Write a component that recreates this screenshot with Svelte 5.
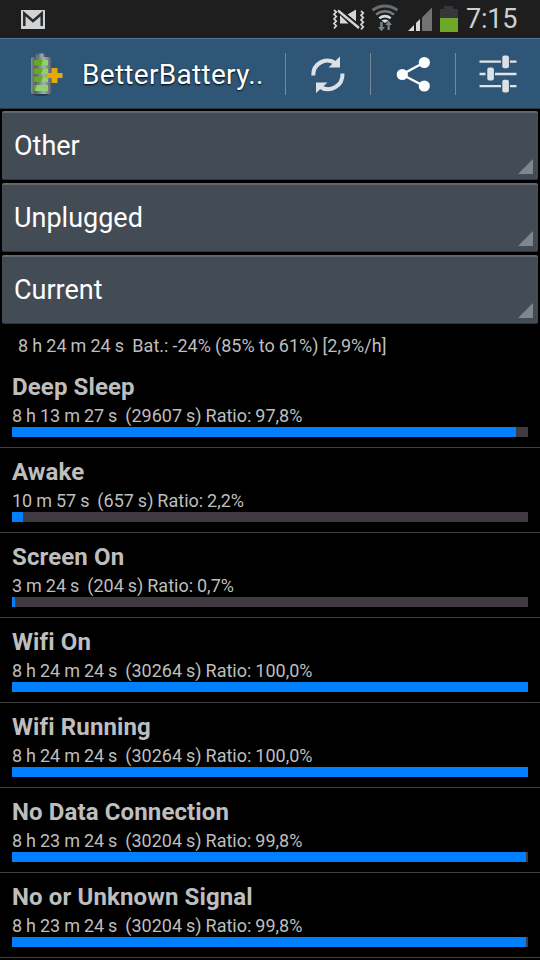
<script>
  const filters = ['Other', 'Unplugged', 'Current'];

  const stats = [
    { name: 'Deep Sleep', time: '8 h 13 m 27 s', secs: 29607, ratio: 97.8 },
    { name: 'Awake', time: '10 m 57 s', secs: 657, ratio: 2.2 },
    { name: 'Screen On', time: '3 m 24 s', secs: 204, ratio: 0.7 },
    { name: 'Wifi On', time: '8 h 24 m 24 s', secs: 30264, ratio: 100 },
    { name: 'Wifi Running', time: '8 h 24 m 24 s', secs: 30264, ratio: 100 },
    { name: 'No Data Connection', time: '8 h 23 m 24 s', secs: 30204, ratio: 99.8 },
    { name: 'No or Unknown Signal', time: '8 h 23 m 24 s', secs: 30204, ratio: 99.8 }
  ];

  // decimal comma, always one digit
  const pct = (n) => n.toFixed(1).replace('.', ',');
  // the bar only fills whole pixels of its 516px track
  const fill = (n) => Math.floor((n / 100) * 516 + 0.01);
</script>

<div class="screen">
  <header class="status">
    <svg class="mail" width="24" height="19" viewBox="0 0 24 19">
      <rect width="24" height="19" fill="#d0d2d4" />
      <path d="M3.300 16V3.500L12 11l8.700-7.500V16" fill="none" stroke="#292b2e" stroke-width="2.500" />
    </svg>
    <svg width="140" height="38" viewBox="330 0 140 38">
      <!-- muted / vibrate -->
      <g fill="none" stroke="#d4d6d7" stroke-width="1.700">
        <path d="M334 10l2.300 2-2.300 2.300 2.300 2.300-2.300 2.300 2.300 2.300-2.300 2.300 2.300 2.300-2.300 2.700" />
        <path d="M361 11l2.300 2-2.300 2.300 2.300 2.300-2.300 2.300 2.300 2.300-2.300 2.300 2.300 2.300-2.300 2.700" />
      </g>
      <path d="M340 15v8.500h8.500zM347.500 14.500l8.500-5v12z" fill="#d4d6d7" />
      <path d="M338.500 10.500l20.500 17" stroke="#1e1e1e" stroke-width="5" />
      <path d="M338 10.500l21 17.500" stroke="#d4d6d7" stroke-width="2.400" />
      <!-- wifi -->
      <g fill="none" stroke-width="2.500">
        <path d="M372.500 10.200q12.500-8.200 25 0" stroke="#666c70" stroke-width="3" />
        <path d="M376 14.500q9-6.300 18 0" stroke="#777c80" />
        <path d="M379.300 18.200q5.700-4.200 11.400 0" stroke="#d7d9da" />
      </g>
      <path d="M381.500 20.500q3.500-2 7 0l-3.500 2.500z" fill="#d7d9da" />
      <path d="M380.200 22h2.500v5h2.200l-3.400 4.300-3.500-4.300h2.200zM387.500 30v-5h-2.300l3.400-4.500 3.500 4.500h-2.300v5z" fill="#77838c" />
      <!-- signal -->
      <path d="M408 31l6-6v6zM416 31v-8l4-4v12z" fill="#d7d9da" />
      <path d="M422 31V17.500L432 7.500V31z" fill="#707274" />
      <!-- battery -->
      <path d="M440 32V9h4V6h9v3h5v23z" fill="#34373b" />
      <rect x="440" y="18" width="18" height="14" fill="#6da82b" />
    </svg>
    <span class="clock">7:15</span>
  </header>

  <div class="actionbar">
    <svg class="logo" width="36" height="46" viewBox="28 50 36 46">
      <defs>
        <linearGradient id="shell">
          <stop offset="0" stop-color="#87929a" />
          <stop offset=".2" stop-color="#52606a" />
          <stop offset=".65" stop-color="#a5b0b6" />
          <stop offset="1" stop-color="#57636c" />
        </linearGradient>
      </defs>
      <ellipse cx="41" cy="93" rx="8" ry="2" fill="#263c4c" />
      <rect x="36" y="52.500" width="9" height="5" rx="2" fill="url(#shell)" />
      <rect x="31" y="56" width="20" height="37" rx="2" fill="url(#shell)" />
      {#each [59, 67.5, 75.5, 84] as y}
        <rect x="34" {y} width="14" height="5.500" fill="#68a91f" />
        <path d="M43 {y}h5v5.500h-7z" fill="#91d06b" />
      {/each}
      <path d="M37 84h11v6H35z" fill="#91d06b" />
      <path d="M51.500 67h6v5h5v5h-5v5h-6v-5h-5v-5h5z" fill="#e4aa0a" />
    </svg>
    <h1>BetterBattery..</h1>
    <button aria-label="Refresh">
      <svg width="84" height="70" viewBox="286 39 84 70">
        <g fill="none" stroke="#dce1e7" stroke-width="4">
          <path d="M313.300 75.500C313 63.500 325.500 56.500 336 63.500" />
          <path d="M342.500 73.500C343 86 330 93.500 319.500 86.500" />
        </g>
        <path d="M340 56.500V67.500h-11.500zM316 93V82.500h11.500z" fill="#dce1e7" />
      </svg>
    </button>
    <button aria-label="Share">
      <svg width="84" height="70" viewBox="371 39 84 70">
        <path d="M424 62.500l-22 12 22 11.500" fill="none" stroke="#fff" stroke-width="2.300" />
        <g fill="#fff">
          <circle cx="424.300" cy="62.500" r="5.600" />
          <circle cx="402.300" cy="74.500" r="5.600" />
          <circle cx="424.300" cy="86" r="5.600" />
        </g>
      </svg>
    </button>
    <button aria-label="Settings">
      <svg width="84" height="70" viewBox="456 39 84 70">
        <path d="M479.500 61.700h21.500M510 61.700h6.500M479.500 74h6M495 74h21.500M479.500 86.200h21.500M510 86.200h6.500" stroke="#dfe4e9" stroke-width="2.300" />
        <g fill="#dce1e7">
          <rect x="502.300" y="55.500" width="6.600" height="12.800" rx="2" />
          <rect x="487.300" y="67.600" width="6.600" height="12.800" rx="2" />
          <rect x="502.300" y="79.700" width="6.600" height="12.800" rx="2" />
        </g>
      </svg>
    </button>
  </div>

  <div class="filters">
    {#each filters as f}
      <div class="spinner">
        <span>{f}</span>
        <svg width="15" height="15" viewBox="0 0 15 15">
          <path d="M15 0v15H0z" fill="#7e878e" />
        </svg>
      </div>
    {/each}
  </div>

  <p class="summary">8 h 24 m 24 s&nbsp; Bat.: -24% (85% to 61%) [2,9%/h]</p>

  <ul class="stats">
    {#each stats as s}
      <li>
        <h2>{s.name}</h2>
        <p>{s.time}&nbsp; ({s.secs} s) Ratio: {pct(s.ratio)}%</p>
        <div class="track"><div class="fill" style="width: {fill(s.ratio)}px"></div></div>
      </li>
    {/each}
  </ul>
</div>

<style>
  :global(body) { background: #000; }

  .screen {
    width: 540px; height: 960px; overflow: hidden;
    display: flex; flex-direction: column;
    background: #000; color: #bebebe;
    font-family: Roboto, sans-serif;
  }

  .status {
    flex: none; height: 38px; padding: 0 22px 0 21px;
    display: flex; align-items: center;
    background: #1e1e1e;
  }
  .mail { margin-right: 285px; }
  .status svg { flex: none; }
  .clock {
    margin-left: -4px; white-space: nowrap;
    font-size: 27px; line-height: 38px; letter-spacing: -0.2px; color: #cdd0d2;
  }

  .actionbar {
    flex: none; box-sizing: border-box; height: 71px;
    display: flex; align-items: center;
    background: #2f5676;
    border-top: 1px solid #507796; border-bottom: 1px solid #283542;
  }
  .logo { flex: none; margin-left: 28px; }
  h1 {
    flex: 1; margin: 3px 0 0 18px; white-space: nowrap;
    font-size: 28px; font-weight: 400; line-height: 70px; letter-spacing: 0.3px; color: #fff;
    text-shadow: 0 1px 2px #000;
  }
  button {
    flex: none; position: relative; width: 85px; height: 69px; padding: 0;
    display: flex; justify-content: flex-end;
    background: none; border: 0;
  }
  button::before {
    content: ''; position: absolute; left: 0; top: 14px;
    width: 1px; height: 42px; background: #7b8791;
  }

  .filters {
    flex: none; padding: 2px 2px 0;
    display: flex; flex-direction: column; gap: 3px;
  }
  .spinner {
    box-sizing: border-box; height: 69px; padding: 0 5px 5px 12px;
    display: flex; align-items: flex-end; justify-content: space-between;
    background: #434c55; border-radius: 2px;
    border-top: 2px solid #616970; border-bottom: 1px solid #2e363c;
  }
  .spinner span { font-size: 27px; line-height: 56px; color: #fff; }

  .summary {
    margin: 0; padding: 11px 18px 0; white-space: nowrap;
    font-size: 18px; line-height: 22px; word-spacing: -0.35px;
  }

  .stats { margin: 6px 0 0; padding: 0; list-style: none; }
  li {
    box-sizing: border-box; height: 85px; padding: 10px 12px 0;
    border-bottom: 1px solid #414141;
  }
  h2 {
    margin: 0;
    font-size: 24px; font-weight: 700; line-height: 28px; letter-spacing: 0.12px;
  }
  li p {
    margin: 4px 0 1px; white-space: nowrap;
    font-size: 18px; line-height: 21px; word-spacing: -0.5px;
  }
  .track { height: 10px; background: #413a41; }
  .fill { height: 10px; background: #0080ff; }
</style>
